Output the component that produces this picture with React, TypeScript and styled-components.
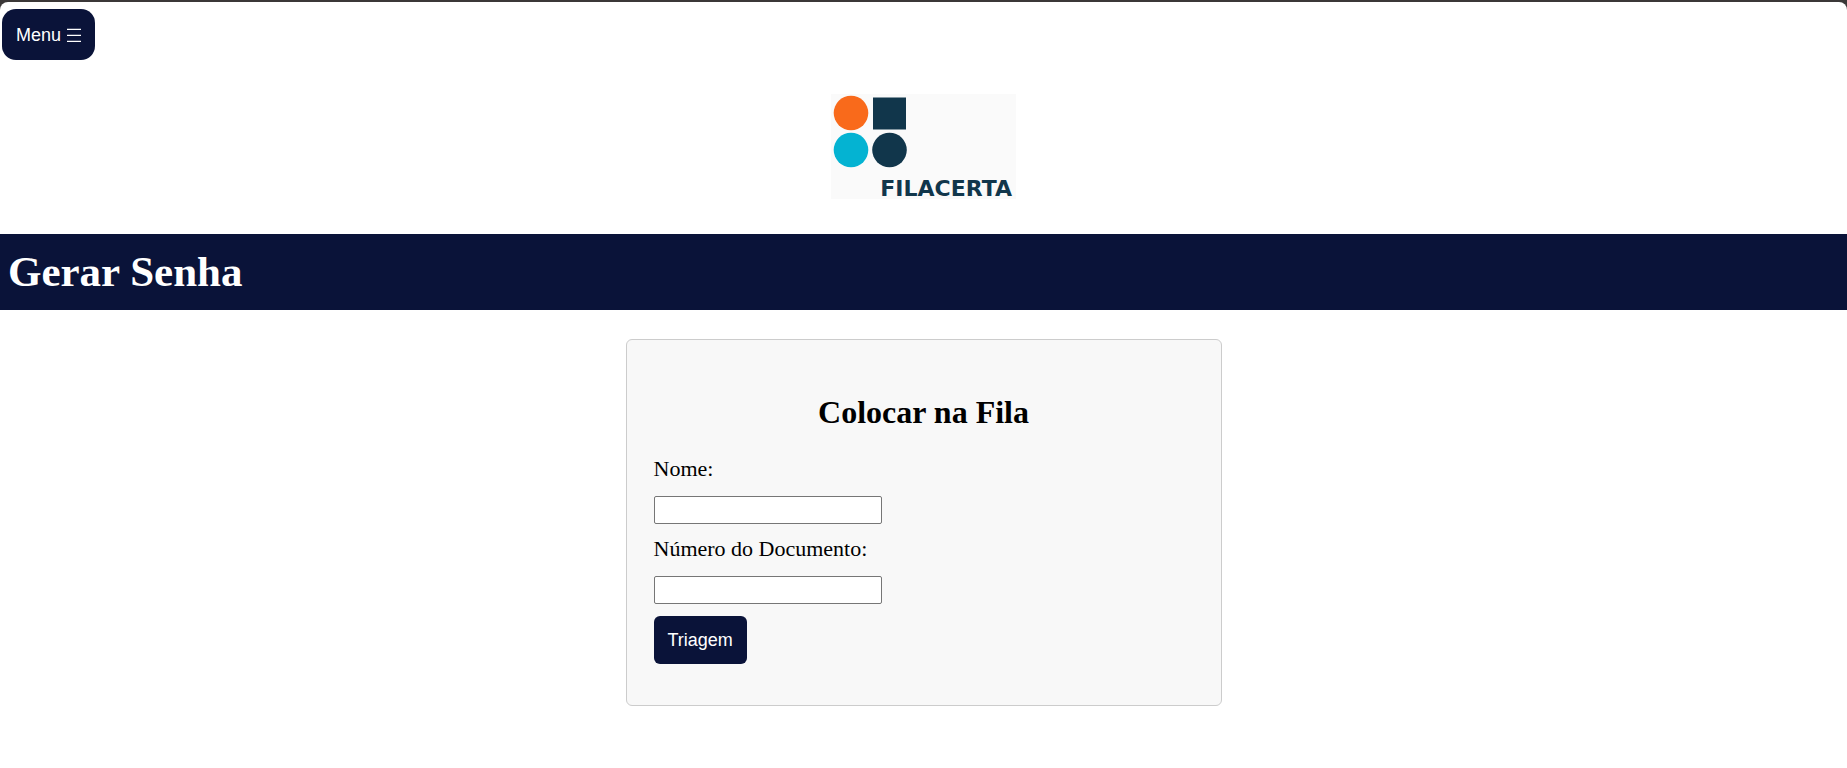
import React from 'react';
import styled, { createGlobalStyle } from 'styled-components';

const GlobalStyle = createGlobalStyle`
  * { box-sizing: border-box; }
  body {
    margin: 0;
    background: #3b3838;
    font-family: "Liberation Serif", "Times New Roman", serif;
    font-size: 22px;
    color: #000;
  }
`;

const Page = styled.div`
  display: flex;
  flex-direction: column;
  min-height: calc(100vh - 2px);
  margin-top: 2px;
  border-radius: 8px 8px 0 0;
  background: #fff;
`;

const TopBar = styled.header`
  display: flex;
  padding: 7px 2px 0;
`;

const Button = styled.button<{ $rounded?: boolean }>`
  height: ${p => (p.$rounded ? 51 : 48)}px;
  padding: 0 14px;
  border: 0;
  border-radius: ${p => (p.$rounded ? 14 : 6)}px;
  background: #0a1339;
  color: #fff;
  font-family: "Liberation Sans", Arial, sans-serif;
  font-size: 18px;
  line-height: 20px;
  cursor: pointer;
`;

const MenuLabel = styled.span`
  display: flex;
  align-items: center;
  gap: 6px;
`;

const LogoRow = styled.div`
  display: flex;
  justify-content: center;
  padding: 34px 0 35px;
`;

const LogoDrawing = styled.svg`
  overflow: visible;
`;

const TitleBar = styled.div`
  padding: 0 8px;
  background: #0a1339;
  color: #fff;
`;

const Title = styled.h1`
  margin: 0;
  font-size: 43px;
  line-height: 76px;
`;

const Card = styled.form`
  display: flex;
  flex-direction: column;
  align-items: flex-start;
  width: 596px;
  max-width: 100%;
  margin: 29px auto;
  padding: 54px 27px 41px;
  border: 1px solid #ccc;
  border-radius: 6px;
  background: #f8f8f8;
`;

const Heading = styled.h2`
  align-self: stretch;
  margin: 0 0 26px;
  font-size: 32px;
  line-height: 36px;
  text-align: center;
`;

const Field = styled.div`
  display: flex;
  flex-direction: column;
  align-items: flex-start;
  gap: 15px;
  margin-bottom: 12px;
`;

const Label = styled.label`
  line-height: 25px;
`;

const Input = styled.input`
  width: 228px;
  max-width: 100%;
  height: 28px;
  padding: 1px 3px;
  border: 1px solid #767676;
  border-radius: 2px;
  background: #fff;
  font-family: "Liberation Sans", Arial, sans-serif;
  font-size: 16px;
`;

const Logo = () => (
  <LogoDrawing width="185" height="105" viewBox="0 0 185 105" role="img" aria-label="Filacerta">
    <rect width="185" height="105" fill="#fafafa" />
    <circle cx="20" cy="19" r="17.3" fill="#f96a1b" />
    <rect x="42" y="3.5" width="33" height="32" fill="#11364b" />
    <circle cx="20" cy="56" r="17.3" fill="#04b3d2" />
    <circle cx="58.5" cy="56" r="17.3" fill="#11364b" />
    <text
      x="181"
      y="102"
      textAnchor="end"
      fill="#11364b"
      fontFamily='"DejaVu Sans", sans-serif'
      fontWeight="700"
      fontSize="22"
    >
      FILACERTA
    </text>
  </LogoDrawing>
);

const MenuIcon = () => (
  <svg width="14" height="14" viewBox="0 0 14 14" aria-hidden="true">
    <path d="M0 1.4H14M0 7.4H14M0 13.4H14" stroke="#fff" strokeWidth="1.2" />
  </svg>
);

export default function App() {
  return (
    <>
      <GlobalStyle />
      <Page>
        <TopBar>
          <Button type="button" $rounded>
            <MenuLabel>
              Menu
              <MenuIcon />
            </MenuLabel>
          </Button>
        </TopBar>
        <LogoRow>
          <Logo />
        </LogoRow>
        <TitleBar>
          <Title>Gerar Senha</Title>
        </TitleBar>
        <main>
          <Card onSubmit={e => e.preventDefault()}>
            <Heading>Colocar na Fila</Heading>
            <Field>
              <Label htmlFor="nome">Nome:</Label>
              <Input id="nome" type="text" />
            </Field>
            <Field>
              <Label htmlFor="documento">Número do Documento:</Label>
              <Input id="documento" type="text" />
            </Field>
            <Button type="submit">Triagem</Button>
          </Card>
        </main>
      </Page>
    </>
  );
}
